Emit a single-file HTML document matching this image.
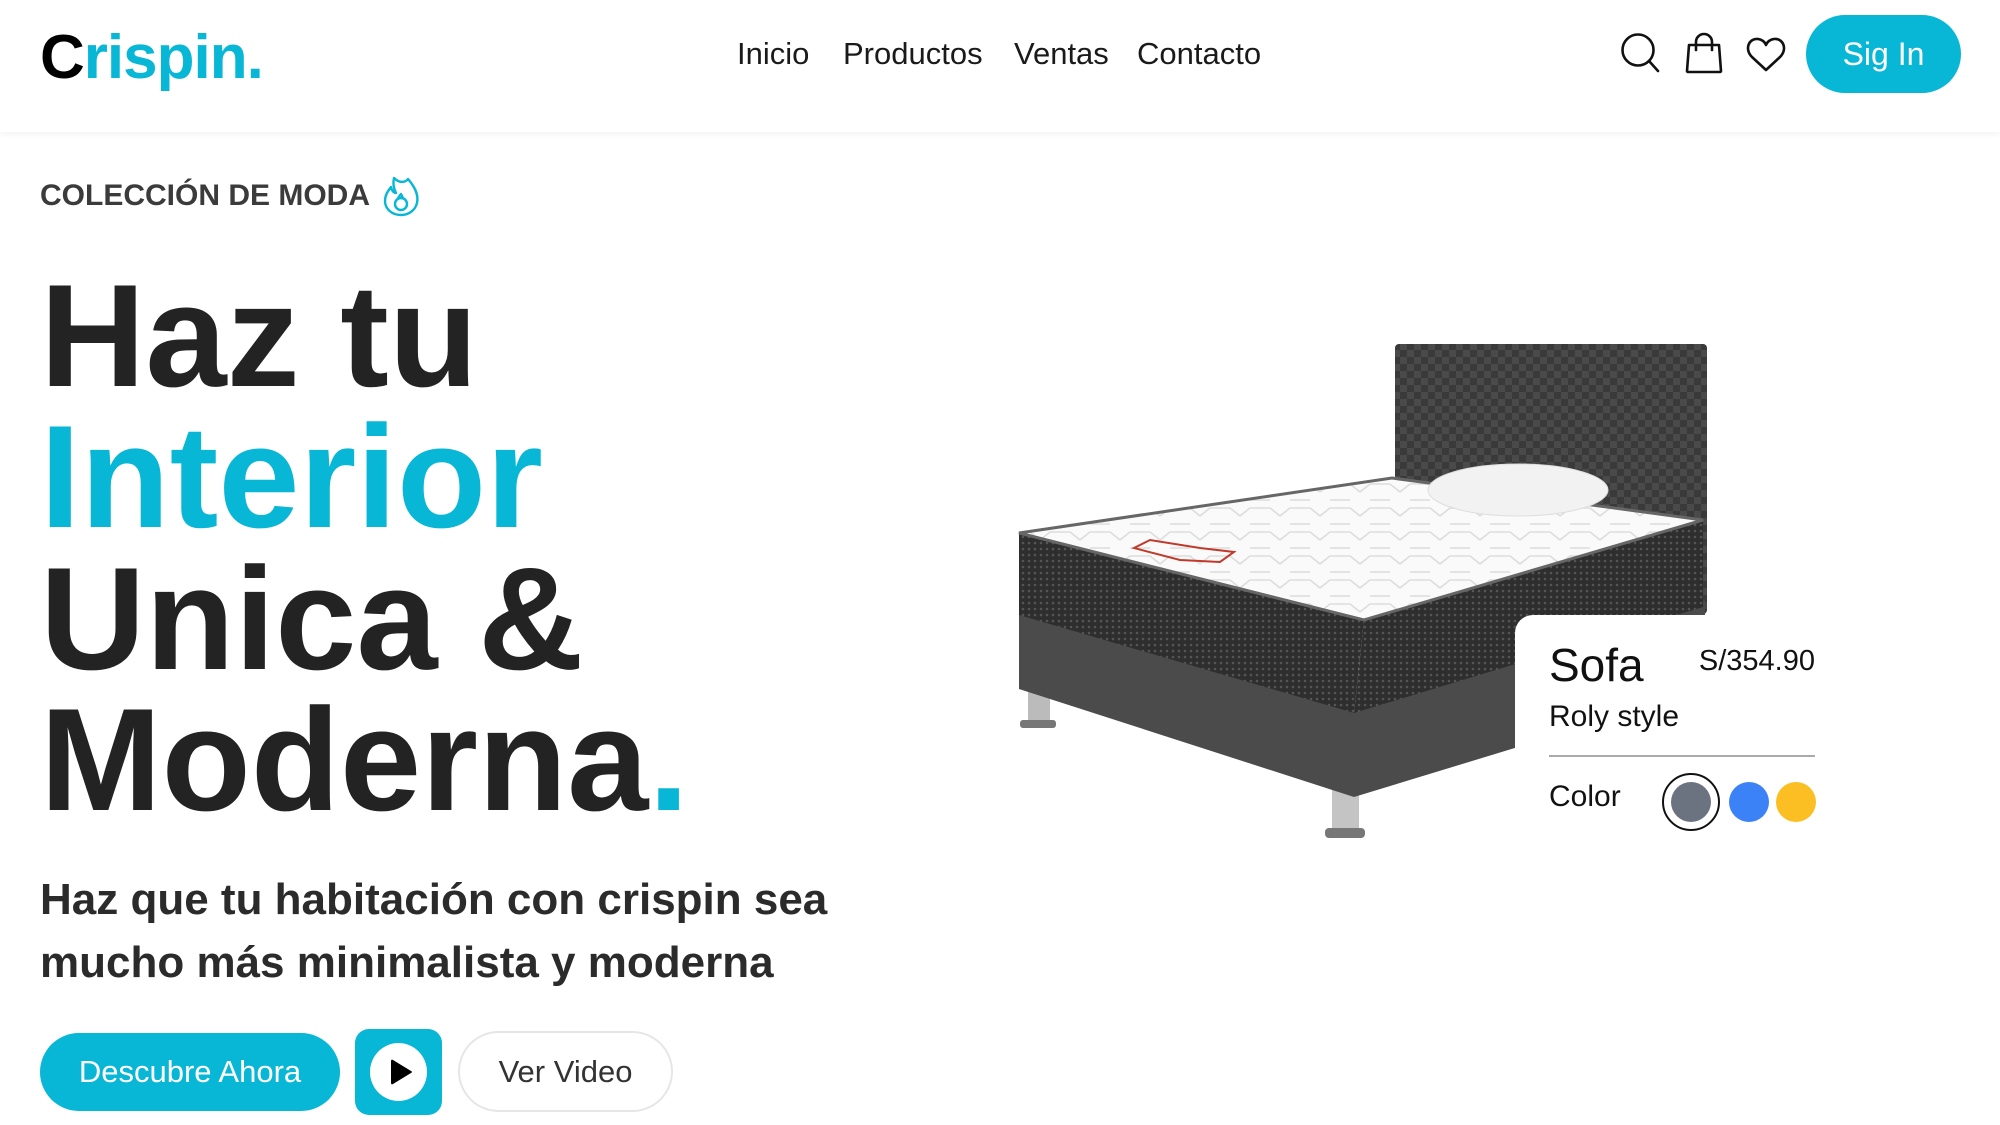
<!DOCTYPE html>
<html><head><meta charset="utf-8"><style>
*{margin:0;padding:0;box-sizing:border-box}
body{width:2000px;height:1125px;overflow:hidden;background:#fff;font-family:"Liberation Sans",sans-serif;position:relative;color:#222}
.a{position:absolute;white-space:nowrap}
header{position:absolute;left:0;top:0;width:2000px;height:132px;background:#fff;box-shadow:0 2px 6px rgba(0,0,0,0.06)}
.nav{font-size:31px;color:#1a1a1a;top:36px}
.h{font-weight:bold;font-size:146px;left:40px;letter-spacing:0px;color:#232323;line-height:1}
.cy{color:#08b6d6}
</style></head><body>
<header>
<div class="a" style="left:40px;top:22px;font-size:62px;font-weight:bold;letter-spacing:-1px;color:#08b6d6"><span style="color:#000">C</span>rispin.</div>
<div class="a nav" style="left:737px">Inicio</div>
<div class="a nav" style="left:843px">Productos</div>
<div class="a nav" style="left:1014px">Ventas</div>
<div class="a nav" style="left:1137px">Contacto</div>
<svg class="a" style="left:1610px;top:30px" width="190" height="50" viewBox="1610 30 190 50" fill="none" stroke="#111" stroke-width="2.6" stroke-linecap="round" stroke-linejoin="round">
<circle cx="1638" cy="50" r="15.5"/><path d="M1649 61 L1658 71"/>
<path d="M1689 45 H1719 L1721 71 a1 1 0 0 1 -1 1 H1688 a1 1 0 0 1 -1 -1 Z"/><path d="M1696 50 V42 a8 8 0 0 1 16 0 V50"/>
<path d="M1766 70 L1752 57 C1744 49 1749 38 1758 39 C1762 39.5 1765 42 1766 45 C1767 42 1770 39.5 1774 39 C1783 38 1788 49 1780 57 Z"/>
</svg>
<div class="a" style="left:1806px;top:15px;width:155px;height:78px;border-radius:39px;background:#08b6d6;color:#fff;font-size:32px;line-height:78px;text-align:center">Sig In</div>
</header>

<div class="a" style="left:40px;top:179px;font-size:30px;font-weight:bold;color:#3b3b3b">COLECCIÓN DE MODA</div>
<svg class="a" style="left:380px;top:174px" width="42" height="44" viewBox="0 0 42 44" fill="none" stroke="#08b6d6" stroke-width="2.4" stroke-linejoin="round">
<path d="M14 4 C20 10 26 8 28 5 C34 12 39 20 37 29 C35 37 28 41 21 41 C12 41 5 35 5 27 C5 20 9 16 11 13 C12 17 14 19 16 19 C13 13 13 8 14 4 Z"/>
<circle cx="21" cy="30" r="6"/><path d="M18 24 L21 20 L23 24"/>
</svg>

<div class="a h" style="top:263px">Haz tu</div>
<div class="a h cy" style="top:404px">Interior</div>
<div class="a h" style="top:546px">Unica &amp;</div>
<div class="a h" style="top:687px">Moderna<span class="cy">.</span></div>

<div class="a" style="left:40px;top:868px;font-size:44px;font-weight:bold;color:#2b2b2b;line-height:63px">Haz que tu habitación con crispin sea<br>mucho más minimalista y moderna</div>

<div class="a" style="left:40px;top:1033px;width:300px;height:78px;border-radius:39px;background:#08b6d6;color:#fff;font-size:31px;line-height:78px;text-align:center">Descubre Ahora</div>
<div class="a" style="left:355px;top:1029px;width:87px;height:86px;border-radius:14px;background:#08b6d6">
<div style="position:absolute;left:15px;top:14px;width:57px;height:58px;border-radius:50%;background:#fff"></div>
<svg style="position:absolute;left:32px;top:29px" width="28" height="28" viewBox="0 0 28 28"><path d="M4 3 Q4 1 6 2 L24 13 Q26 14 24 15 L6 26 Q4 27 4 25 Z" fill="#000"/></svg>
</div>
<div class="a" style="left:458px;top:1031px;width:215px;height:81px;border-radius:41px;border:2px solid #e6e6e6;color:#333;font-size:31px;line-height:77px;text-align:center">Ver Video</div>

<svg class="a" style="left:0;top:0" width="2000" height="1125" viewBox="0 0 2000 1125">
<defs>
<pattern id="wv" width="14" height="14" patternUnits="userSpaceOnUse"><rect width="14" height="14" fill="#4a4a4a"/><rect width="7" height="7" fill="#3a3a3a"/><rect x="7" y="7" width="7" height="7" fill="#3a3a3a"/></pattern>
<pattern id="mesh" width="6" height="6" patternUnits="userSpaceOnUse"><rect width="6" height="6" fill="#2e2e2e"/><circle cx="3" cy="3" r="1.3" fill="#555"/></pattern>
<pattern id="q" width="40" height="24" patternUnits="userSpaceOnUse"><rect width="40" height="24" fill="#fafafa"/><path d="M0 12 L10 4 L30 4 L40 12 M10 20 L30 20" stroke="#dcdcdc" stroke-width="1.5" fill="none"/></pattern>
</defs>
<rect x="1395" y="344" width="312" height="270" rx="4" fill="url(#wv)"/>
<rect x="1028" y="685" width="22" height="38" fill="#bbb"/><rect x="1020" y="720" width="36" height="8" rx="3" fill="#777"/>
<rect x="1332" y="790" width="27" height="43" fill="#c4c4c4"/><rect x="1325" y="828" width="40" height="10" rx="4" fill="#777"/>
<polygon points="1019,613 1354,711 1705,600 1705,690 1354,797 1019,689" fill="#4b4b4b"/>
<polygon points="1019,533 1364,620 1354,713 1019,615" fill="url(#mesh)"/>
<polygon points="1364,620 1703,520 1703,607 1354,713" fill="url(#mesh)"/>
<polygon points="1019,533 1392,478 1703,520 1364,620" fill="url(#q)" stroke="#666" stroke-width="3"/>
<path d="M1134 548 L1150 540 L1200 548 L1234 552 L1220 562 L1180 560 Z" fill="none" stroke="#c0392b" stroke-width="2"/>
<ellipse cx="1518" cy="490" rx="90" ry="26" fill="#f2f2f2" stroke="#ddd"/>
</svg>

<div class="a" style="left:1515px;top:615px;width:380px;height:270px;background:#fff;border-radius:18px 0 0 0"></div>
<div class="a" style="left:1549px;top:638px;font-size:46px;color:#111">Sofa</div>
<div class="a" style="left:1694px;width:121px;text-align:right;top:645px;font-size:29px;color:#111">S/354.90</div>
<div class="a" style="left:1549px;top:700px;font-size:30px;color:#111">Roly style</div>
<div class="a" style="left:1549px;top:755px;width:266px;height:2px;background:#aaa"></div>
<div class="a" style="left:1549px;top:780px;font-size:30px;color:#111">Color</div>
<div class="a" style="left:1662px;top:773px;width:58px;height:58px;border-radius:50%;border:2.5px solid #111"></div>
<div class="a" style="left:1671px;top:782px;width:40px;height:40px;border-radius:50%;background:#6b7280"></div>
<div class="a" style="left:1729px;top:782px;width:40px;height:40px;border-radius:50%;background:#3b82f6"></div>
<div class="a" style="left:1776px;top:782px;width:40px;height:40px;border-radius:50%;background:#fbbf24"></div>
</body></html>
